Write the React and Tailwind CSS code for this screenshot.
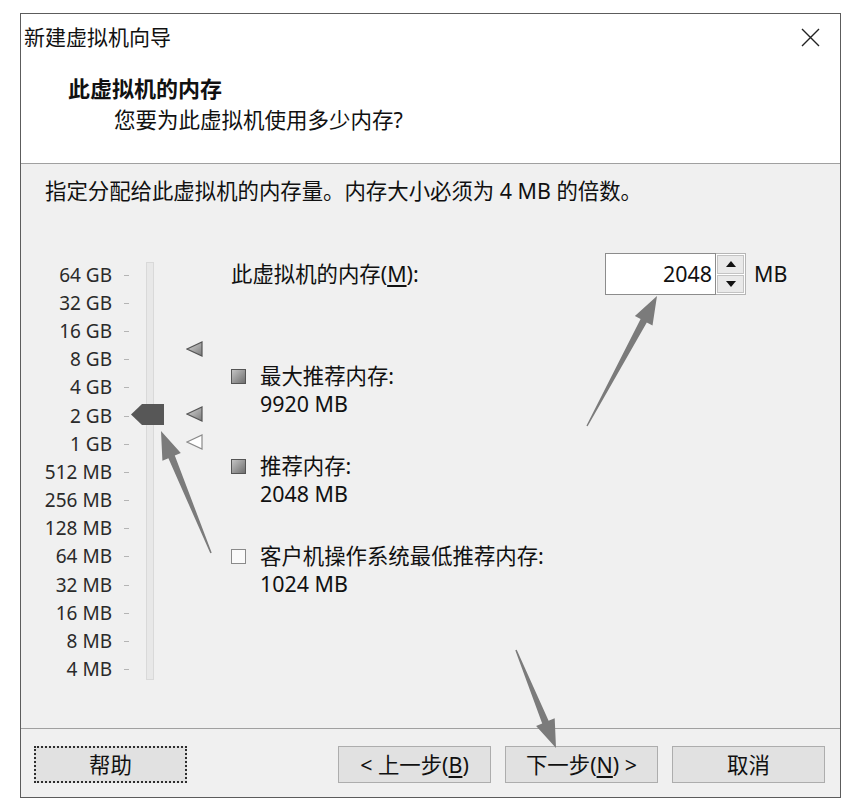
import React from "react";

const labels = ["64 GB","32 GB","16 GB","8 GB","4 GB","2 GB","1 GB","512 MB","256 MB","128 MB","64 MB","32 MB","16 MB","8 MB","4 MB"];

function Marker({ top, hollow }) {
  return (
    <svg className="absolute left-0" style={{ top }} width="17" height="16" viewBox="0 0 17 16">
      <defs>
        <linearGradient id="mg" x1="0" y1="0" x2="1" y2="1">
          <stop offset="0" stopColor="#d8d8d8" />
          <stop offset="1" stopColor="#7a7a7a" />
        </linearGradient>
      </defs>
      <polygon points="1,8 16,1 16,15" fill={hollow ? "#ffffff" : "url(#mg)"} stroke={hollow ? "#8a8a8a" : "#555"} strokeWidth="1.2" />
    </svg>
  );
}

function LegendSquare({ hollow }) {
  return (
    <div className={"w-[15px] h-[15px] border mt-[7px] shrink-0 " + (hollow ? "border-[#8a8a8a] bg-[#fafafa]" : "border-[#555] bg-[linear-gradient(135deg,#c4c4c4,#6e6e6e)]")} />
  );
}

export default function App() {
  return (
    <div className="relative w-[867px] h-[812px] bg-white font-['Noto_Sans','Noto_Sans_CJK_SC',sans-serif] text-[#111] overflow-hidden">
      <div className="absolute left-[20px] top-[13px] w-[821px] h-[785px] border border-[#5c5c5c] flex flex-col bg-white">
        {/* title bar */}
        <div className="h-[47px] flex items-center justify-between pl-[3px] pr-[20px] shrink-0">
          <span className="text-[21px] leading-none">新建虚拟机向导</span>
          <svg width="19" height="19" viewBox="0 0 19 19">
            <path d="M1 1 L18 18 M18 1 L1 18" stroke="#222" strokeWidth="1.4" />
          </svg>
        </div>
        {/* header */}
        <div className="h-[103px] shrink-0 border-b border-[#a0a0a0] pt-[13px] pl-[47px]">
          <div className="text-[22px] leading-[28px] font-bold">此虚拟机的内存</div>
          <div className="text-[21.5px] leading-[28px] mt-[4px] pl-[46px]">您要为此虚拟机使用多少内存?</div>
        </div>
        {/* body */}
        <div className="flex-1 bg-[#f0f0f0] flex flex-col">
          <div className="pt-[13px] pl-[24px] text-[21.4px] leading-[28px]">指定分配给此虚拟机的内存量。内存大小必须为 4 MB 的倍数。</div>
          <div className="mt-[48px] flex">
            {/* slider */}
            <div className="relative flex">
              <div className="w-[91px] pt-[8px] flex flex-col text-[19px] text-[#2a2a2a]">
                {labels.map((l) => (
                  <div key={l} className="h-[28.2px] flex items-center justify-end leading-none">{l}</div>
                ))}
              </div>
              <div className="w-[5px] ml-[12px] pt-[8px] flex flex-col">
                {labels.map((l) => (
                  <div key={l} className="h-[28.2px] flex items-center">
                    <div className="w-[5px] h-px bg-[#b4b4b4]" />
                  </div>
                ))}
              </div>
              <div className="ml-[17px] mt-[9px] w-[8px] h-[418px] border border-[#d9d9d9] bg-[#e8e8e8]" />
              <div className="relative ml-[32px] w-[17px]">
                <Marker top={88} />
                <Marker top={153} />
                <Marker top={181} hollow />
              </div>
              <svg className="absolute left-[110px] top-[151px]" width="34" height="21" viewBox="0 0 34 21">
                <polygon points="0,10.5 11,0 33,0 33,21 11,21" fill="#575757" />
              </svg>
            </div>
            {/* right column */}
            <div className="ml-[28px] flex-1 flex flex-col text-[21.4px]">
              <div className="h-[42px] flex items-center">
                <span className="w-[374px] leading-none">此虚拟机的内存(<span className="underline underline-offset-[3px]">M</span>):</span>
                <div className="flex items-stretch h-[42px]">
                  <div className="w-[111px] bg-white border border-[#8c8c8c] flex items-center justify-end pr-[3px] leading-none">2048</div>
                  <div className="w-[30px] flex flex-col border-y border-r border-[#b5b5b5] bg-white">
                    <div className="flex-1 m-[1px] mb-0 bg-[#e9e9e9] border border-[#c3c3c3] flex items-center justify-center">
                      <svg width="10" height="6" viewBox="0 0 10 6"><polygon points="5,0 10,6 0,6" fill="#111" /></svg>
                    </div>
                    <div className="flex-1 m-[1px] bg-[#e9e9e9] border border-[#c3c3c3] flex items-center justify-center">
                      <svg width="10" height="6" viewBox="0 0 10 6"><polygon points="0,0 10,0 5,6" fill="#111" /></svg>
                    </div>
                  </div>
                  <span className="ml-[8px] self-center leading-none">MB</span>
                </div>
              </div>
              <div className="mt-[67px] flex flex-col gap-[34px]">
                <div className="flex gap-[14px]">
                  <LegendSquare />
                  <div className="leading-[28px]"><div>最大推荐内存:</div><div>9920 MB</div></div>
                </div>
                <div className="flex gap-[14px]">
                  <LegendSquare />
                  <div className="leading-[28px]"><div>推荐内存:</div><div>2048 MB</div></div>
                </div>
                <div className="flex gap-[14px]">
                  <LegendSquare hollow />
                  <div className="leading-[28px]"><div>客户机操作系统最低推荐内存:</div><div>1024 MB</div></div>
                </div>
              </div>
            </div>
          </div>
        </div>
        {/* footer */}
        <div className="h-[69px] shrink-0 bg-[#f0f0f0] border-t border-[#a0a0a0] pt-[17px] pl-[13px] pr-[15px] flex text-[21.4px]">
          <div className="w-[153px] h-[37px] border-2 border-dotted border-[#2e2e2e] bg-[#e1e1e1] flex items-center justify-center leading-none">帮助</div>
          <div className="flex-1" />
          <div className="flex gap-[14px]">
            <div className="w-[153px] h-[37px] border border-[#adadad] bg-[#e1e1e1] flex items-center justify-center leading-none">&lt; 上一步(<span className="underline underline-offset-[3px]">B</span>)</div>
            <div className="w-[153px] h-[37px] border border-[#adadad] bg-[#e1e1e1] flex items-center justify-center leading-none">下一步(<span className="underline underline-offset-[3px]">N</span>) &gt;</div>
            <div className="w-[153px] h-[37px] border border-[#adadad] bg-[#e1e1e1] flex items-center justify-center leading-none">取消</div>
          </div>
        </div>
      </div>
      {/* annotation arrows */}
      <svg className="absolute inset-0 pointer-events-none" width="867" height="812" viewBox="0 0 867 812">
        <polygon points="211.7,552.7 174.8,455.6 180.8,453.1 161,431 162.4,460.7 168.4,458.2 210.3,553.3" fill="#7b7b7b" />
        <polygon points="587.6,426.3 646.8,322.4 652.5,325.4 657,296 634.9,316 640.6,319 586.4,425.7" fill="#7b7b7b" />
        <polygon points="515.3,650.3 542.2,723.4 536.1,725.9 556,748 554.7,718.3 548.6,720.8 516.7,649.7" fill="#7b7b7b" />
      </svg>
    </div>
  );
}
